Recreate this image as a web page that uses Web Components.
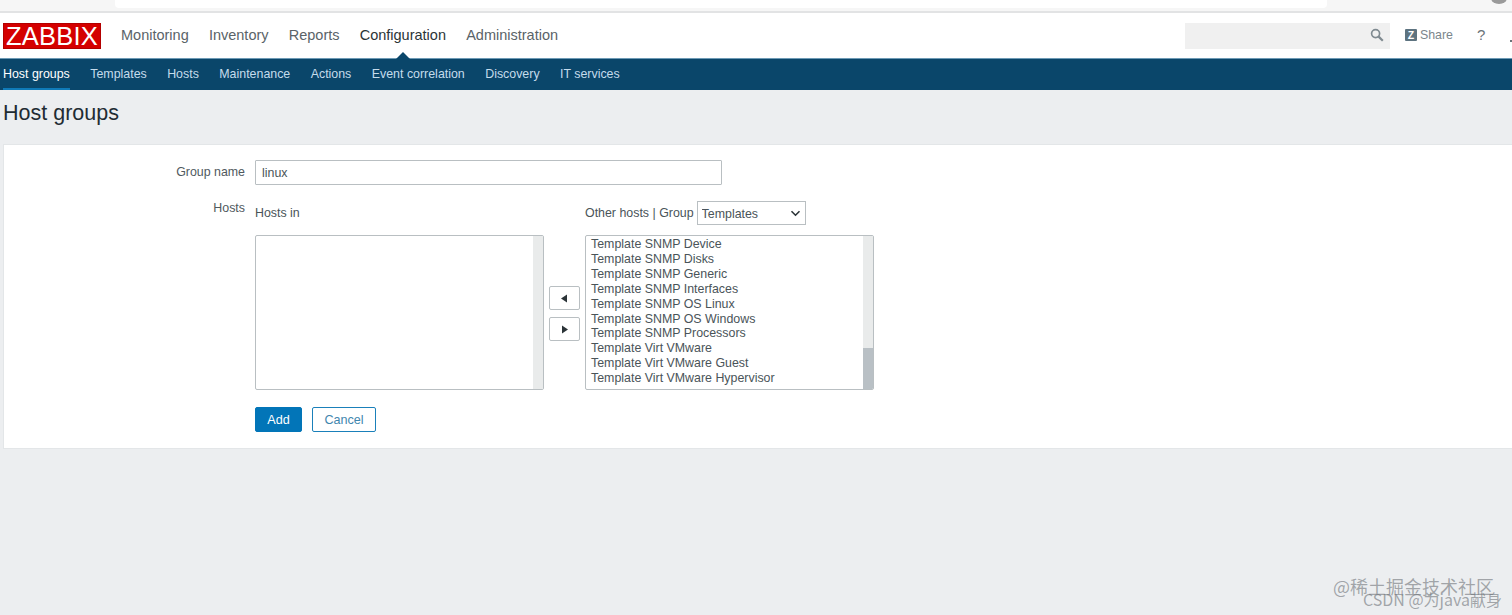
<!DOCTYPE html>
<html lang="en"><head><meta charset="utf-8"><title>Host groups</title>
<style>
html,body{margin:0;padding:0;height:615px;overflow:hidden}
body{background:#ecEef0;font-family:"Liberation Sans",Arial,sans-serif;color:#4a5459}
</style></head><body>
<z-browser-strip></z-browser-strip>
<z-top-nav></z-top-nav>
<z-sub-nav></z-sub-nav>
<z-page-title>Host groups</z-page-title>
<z-group-form></z-group-form>
<z-watermark></z-watermark>
<script>
function def(name,html){
  customElements.define(name,class extends HTMLElement{
    constructor(){super();this.attachShadow({mode:'open'}).innerHTML=html;}
  });
}
def('z-browser-strip',`<style>
:host{display:block;height:13px;background:#f6f6f6;box-sizing:border-box;border-bottom:2px solid #e2e3e4;padding-left:115px;position:relative}
.w{width:1212px;height:8px;background:#fff;border-radius:0 0 4px 4px}
.a{position:absolute;right:5px;top:-8px;width:16px;height:12px;border-radius:50%;background:#9a9a9a}
</style><div class="w"></div><div class="a"></div>`);

def('z-top-nav',`<style>
:host{display:flex;align-items:flex-start;height:45px;background:#fff;box-sizing:border-box;padding:10px 0 0 3px;font-size:14.5px;position:relative}
.logo{width:98px;height:26px;box-sizing:border-box;background:#d40000;border:1px solid #b30000;color:#fff;font-size:25.5px;line-height:25px;text-align:center;letter-spacing:.2px;margin-right:20px;overflow:hidden}
nav{display:flex;gap:20.2px;line-height:24px}
nav a{color:#5a6368}nav a.on{color:#2b3438}
.right{margin-left:auto;display:flex;align-items:flex-start}
.search{width:205px;height:26px;background:#f0f0f0;display:flex;justify-content:flex-end;align-items:center;padding:0 6px 2px 0;box-sizing:border-box;margin-right:15px}
.share{display:flex;align-items:center;gap:3px;font-size:12.4px;color:#7b868c;line-height:24px;margin-right:24px}
.z{width:12px;height:12px;background:#5d7380;color:#fff;font-size:10.5px;font-weight:bold;line-height:12px;text-align:center;border-radius:1px}
.q{font-size:15px;color:#6a7378;line-height:24px;margin-right:20px;width:10px}
.cut{width:5px;height:24px;display:flex;align-items:flex-end;justify-content:flex-end}
.cut i{display:block;width:2px;height:2px;background:#6a7378;margin-bottom:5px}
</style>
<div class="logo">ZABBIX</div>
<nav><a>Monitoring</a><a>Inventory</a><a>Reports</a><a class="on">Configuration</a><a>Administration</a></nav>
<div class="right">
<div class="search"><svg width="14" height="14" viewBox="0 0 14 14" fill="none" stroke="#7f8a90"><circle cx="5.6" cy="5.6" r="4" stroke-width="1.7"/><path d="M8.6 8.6l4.2 4.2" stroke-width="2.2"/></svg></div>
<div class="share"><span class="z">Z</span><span>Share</span></div>
<div class="q">?</div><div class="cut"><i></i></div>
</div>`);

def('z-sub-nav',`<style>
:host{display:flex;position:relative;height:32px;background:#0a466a;box-sizing:border-box;border-top:1px solid #6d9ab5;padding-left:3px;font-size:12.4px;gap:20.45px;line-height:30px;color:#c5dcec}
a{display:block;height:31px;box-sizing:border-box}
a.on{color:#fff;border-bottom:2px solid #0f7ab8}
.caret{position:absolute;left:396px;top:-7px;width:0;height:0;border-left:7px solid transparent;border-right:7px solid transparent;border-bottom:7px solid #0a466a}
</style>
<a class="on">Host groups</a><a>Templates</a><a>Hosts</a><a>Maintenance</a><a>Actions</a><a>Event correlation</a><a>Discovery</a><a>IT services</a>
<div class="caret"></div>`);

def('z-page-title',`<style>
:host{display:block;height:54px;box-sizing:border-box;padding:9px 0 0 3px;font-size:21.5px;line-height:28px;color:#1f2c33}
</style><slot></slot>`);

def('z-listbox',`<style>
:host{display:flex;width:100%;height:155px;box-sizing:border-box;background:#fff;border:1px solid #b9bfc2;border-radius:2px;font-size:12.4px;line-height:14.9px;color:#4a5459;overflow:hidden}
.items{flex:1;padding:1px 0 0 5px}
::slotted(div){white-space:nowrap}
.track{width:10px;background:#e9ebeb;display:flex;flex-direction:column;justify-content:flex-end}
.thumb{height:var(--thumb,0);background:#b9c0c5}
</style><div class="items"><slot></slot></div><div class="track"><div class="thumb"></div></div>`);

def('z-arrow-btn',`<style>
:host{display:flex;align-items:center;justify-content:center;width:31px;height:24px;box-sizing:border-box;background:#fff;border:1px solid #b9bfc2;border-radius:2px}
</style><slot></slot>`);

def('z-group-form',`<style>
:host{display:block;margin-left:3px;height:305px;box-sizing:border-box;background:#fff;border:1px solid #e3e6e8;border-right:0;padding-top:15px;font-size:12.4px;color:#4a5459}
.row{display:grid;grid-template-columns:241px 1fr;column-gap:10px}
.label{text-align:right;color:#50595e}
.r1{height:40px}.r1 .label{line-height:25px}
.input{width:467px;height:25px;box-sizing:border-box;border:1px solid #b9bfc2;border-radius:1px;padding-left:6px;line-height:25px}
.r2 .label{line-height:16px}
.tw{display:grid;grid-template-columns:289px 41px 289px}
.h{height:35px;display:flex;align-items:flex-start}
.hin{margin-top:5px;line-height:16px}
.hr{display:flex;align-items:flex-start;gap:3px;line-height:25px;margin-top:1px}
.sel{position:relative;width:109px;height:25px}
select{appearance:none;-webkit-appearance:none;display:block;font:inherit;font-size:12.4px;color:#4a5459;width:109px;height:24px;background:#fff;border:1px solid #b9bfc2;border-radius:0;padding:0 0 3px 4px;margin:0}
.sel svg{position:absolute;right:5px;top:9px;pointer-events:none}
.mid{display:flex;flex-direction:column;gap:7px;align-items:center;justify-content:center;padding-top:2px}
.btns{display:flex;gap:10px;margin-top:17px}
.add,.cancel{height:25px;box-sizing:border-box;border-radius:2px;line-height:24px;text-align:center;font-size:12.6px}
.add{width:47px;background:#0275b8;border:1px solid #0275b8;color:#fff}
.cancel{width:64px;background:#fff;border:1px solid #1a80ba;color:#3f86ae}
</style>
<div class="row r1"><div class="label">Group name</div><div><div class="input">linux</div></div></div>
<div class="row r2"><div class="label">Hosts</div><div>
  <div class="tw">
    <div class="h"><div class="hin">Hosts in</div></div><div></div>
    <div class="h"><div class="hr">Other hosts | Group <span class="sel"><select><option>Templates</option></select><svg width="11" height="7" viewBox="0 0 11 7" fill="none" stroke="#2b3438" stroke-width="1.6"><path d="M1.5 1.2l4 4 4-4"/></svg></span></div></div>
    <z-listbox></z-listbox>
    <div class="mid">
      <z-arrow-btn><svg width="9" height="9" viewBox="0 0 9 9"><path d="M7 0.5v8L1 4.5z" fill="#2b3438"/></svg></z-arrow-btn>
      <z-arrow-btn><svg width="9" height="9" viewBox="0 0 9 9"><path d="M2 0.5v8L8 4.5z" fill="#2b3438"/></svg></z-arrow-btn>
    </div>
    <z-listbox style="--thumb:41px">
      <div>Template SNMP Device</div><div>Template SNMP Disks</div><div>Template SNMP Generic</div><div>Template SNMP Interfaces</div><div>Template SNMP OS Linux</div><div>Template SNMP OS Windows</div><div>Template SNMP Processors</div><div>Template Virt VMware</div><div>Template Virt VMware Guest</div><div>Template Virt VMware Hypervisor</div>
    </z-listbox>
  </div>
  <div class="btns"><div class="add">Add</div><div class="cancel">Cancel</div></div>
</div></div>`);

def('z-watermark',`<style>
:host{display:block;position:absolute;left:1340px;top:565px;width:172px;height:50px;font-size:18px;color:rgba(110,115,120,.6);font-family:"Noto Sans CJK SC","Liberation Sans",sans-serif;pointer-events:none}
div{position:absolute;white-space:nowrap;line-height:20px}
.a{left:-7px;top:11px}.b{left:23px;top:24px;font-size:16px}
</style><div class="a">@稀土掘金技术社区</div><div class="b">CSDN @为java献身</div>`);
</script>
</body></html>
